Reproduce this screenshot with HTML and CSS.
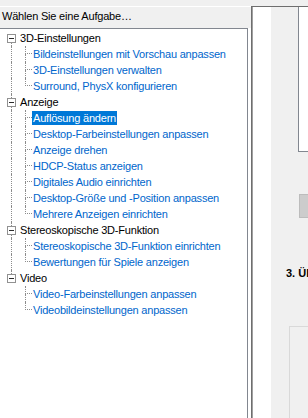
FILE: index.html
```html
<!DOCTYPE html>
<html lang="de">
<head>
    <meta charset="UTF-8">
    <title>NVIDIA Systemsteuerung</title>
    <link rel="stylesheet" href="styles.css">
</head>
<body>
    <div class="tasks">
        <div class="tasks-title">Wählen Sie eine Aufgabe…</div>
        <div class="tasks-body">
            <div class="tree">
                <!-- 3D-Einstellungen -->
                <div class="row"><span class="knot first"><i class="up"></i><b class="box"></b><i class="down"></i></span><span class="label head">3D-Einstellungen</span></div>
                <div class="row"><span class="trunk"></span><span class="elbow"><i></i><b></b></span><span class="label">Bildeinstellungen mit Vorschau anpassen</span></div>
                <div class="row"><span class="trunk"></span><span class="elbow"><i></i><b></b></span><span class="label">3D-Einstellungen verwalten</span></div>
                <div class="row"><span class="trunk"></span><span class="elbow last"><i></i><b></b></span><span class="label">Surround, PhysX konfigurieren</span></div>

                <!-- Anzeige -->
                <div class="row"><span class="knot"><i class="up"></i><b class="box"></b><i class="down"></i></span><span class="label head">Anzeige</span></div>
                <div class="row"><span class="trunk"></span><span class="elbow"><i></i><b></b></span><span class="label selected">Auflösung ändern</span></div>
                <div class="row"><span class="trunk"></span><span class="elbow"><i></i><b></b></span><span class="label">Desktop-Farbeinstellungen anpassen</span></div>
                <div class="row"><span class="trunk"></span><span class="elbow"><i></i><b></b></span><span class="label">Anzeige drehen</span></div>
                <div class="row"><span class="trunk"></span><span class="elbow"><i></i><b></b></span><span class="label">HDCP-Status anzeigen</span></div>
                <div class="row"><span class="trunk"></span><span class="elbow"><i></i><b></b></span><span class="label">Digitales Audio einrichten</span></div>
                <div class="row"><span class="trunk"></span><span class="elbow"><i></i><b></b></span><span class="label">Desktop-Größe und -Position anpassen</span></div>
                <div class="row"><span class="trunk"></span><span class="elbow last"><i></i><b></b></span><span class="label">Mehrere Anzeigen einrichten</span></div>

                <!-- Stereoskopische 3D-Funktion -->
                <div class="row"><span class="knot"><i class="up"></i><b class="box"></b><i class="down"></i></span><span class="label head">Stereoskopische 3D-Funktion</span></div>
                <div class="row"><span class="trunk"></span><span class="elbow"><i></i><b></b></span><span class="label">Stereoskopische 3D-Funktion einrichten</span></div>
                <div class="row"><span class="trunk"></span><span class="elbow last"><i></i><b></b></span><span class="label">Bewertungen für Spiele anzeigen</span></div>

                <!-- Video -->
                <div class="row"><span class="knot last"><i class="up"></i><b class="box"></b><i class="down"></i></span><span class="label head">Video</span></div>
                <div class="row"><span class="trunk none"></span><span class="elbow"><i></i><b></b></span><span class="label">Video-Farbeinstellungen anpassen</span></div>
                <div class="row"><span class="trunk none"></span><span class="elbow last"><i></i><b></b></span><span class="label">Videobildeinstellungen anpassen</span></div>
            </div>
            <div class="splitter"></div>
        </div>
    </div>

    <div class="side">
        <div class="strip"></div>
        <div class="pane">
            <div class="frame"></div>
            <div class="knob"></div>
            <div class="step">3. Übernehmen Sie die folgenden Einstellungen.</div>
            <div class="group-box"></div>
        </div>
    </div>
</body>
</html>
```

FILE: styles.css
```css
html, body {
    margin: 0;
    padding: 0;
}

body {
    display: flex;
    height: 418px;
    padding-top: 6px;
    box-sizing: border-box;
    overflow: hidden;
    background-color: #f0f0f0;
    font-family: "Liberation Sans", Arial, sans-serif;
    font-size: 11px;
    letter-spacing: -0.2px;
}

/* left task panel */
.tasks {
    width: 251px;
    display: flex;
    flex-direction: column;
    border-top: 1px solid #ffffff;
}

.tasks-title {
    height: 21px;
    padding: 1px 0 0 2px;
    box-sizing: border-box;
    line-height: 16px;
    color: #000;
}

.tasks-body {
    flex: 1;
    display: flex;
}

.tree {
    width: 247px;
    padding-top: 1px;
    background-color: #fff;
    border-top: 1px solid #828790;
    border-right: 1px solid #828790;
}

.splitter {
    flex: 1;
    background-color: #fff;
}

.row {
    display: flex;
    height: 16px;
    align-items: flex-start;
}

.label {
    margin-top: 1px;
    padding: 0 1px;
    line-height: 14px;
    white-space: nowrap;
    color: #0066cc;
}

.label.head {
    margin-left: 3px;
    color: #000;
}

.label.selected {
    background-color: #0078d7;
    color: #fff;
}

/* expand box with the sibling line through it */
.knot {
    display: flex;
    flex-direction: column;
    width: 9px;
    height: 16px;
    margin-left: 7px;
}

.knot .up {
    height: 4px;
    margin-left: 4px;
    border-left: 1px dotted #8c8c8c;
}

.knot .down {
    flex: 1;
    margin-left: 4px;
    border-left: 1px dotted #8c8c8c;
}

.knot.first .up,
.knot.last .down {
    border-color: transparent;
}

.box {
    width: 7px;
    height: 7px;
    border: 1px solid #919191;
    background: linear-gradient(#2b2b2b, #2b2b2b) center / 5px 1px no-repeat, #fff;
}

/* child connectors */
.trunk {
    height: 16px;
    margin-left: 11px;
    border-left: 1px dotted #8c8c8c;
}

.trunk.none {
    border-color: transparent;
}

.elbow {
    display: flex;
    flex-direction: column;
    width: 7px;
    height: 16px;
    margin-left: 13px;
}

.elbow i {
    height: 7px;
    border-left: 1px dotted #8c8c8c;
    border-bottom: 1px dotted #8c8c8c;
}

.elbow b {
    flex: 1;
    border-left: 1px dotted #8c8c8c;
}

.elbow.last b {
    border-color: transparent;
}

/* right side, cut off by the window */
.side {
    flex: 1;
    display: flex;
    overflow: hidden;
    border-top: 1px solid #6e6e6e;
    border-left: 1px solid #6e6e6e;
}

.strip {
    width: 18px;
    flex-shrink: 0;
    background-color: #fff;
    border-left: 1px solid #a0a0a0;
}

.pane {
    width: 200px;
    flex-shrink: 0;
    background-color: #f0f0f0;
}

.frame {
    width: 100px;
    height: 144px;
    margin-left: 27px;
    background-color: #fff;
    border-left: 1px solid #828790;
    border-bottom: 1px solid #828790;
}

.knob {
    width: 60px;
    height: 22px;
    margin: 42px 0 0 28px;
    background-color: #cccccc;
    border: 1px solid #bcbcbc;
}

.step {
    margin: 47px 0 0 15px;
    line-height: 16px;
    font-weight: bold;
    letter-spacing: 0;
    white-space: nowrap;
}

.group-box {
    width: 120px;
    height: 120px;
    margin: 45px 0 0 18px;
    border: 1px solid #d9d9d9;
}
```
